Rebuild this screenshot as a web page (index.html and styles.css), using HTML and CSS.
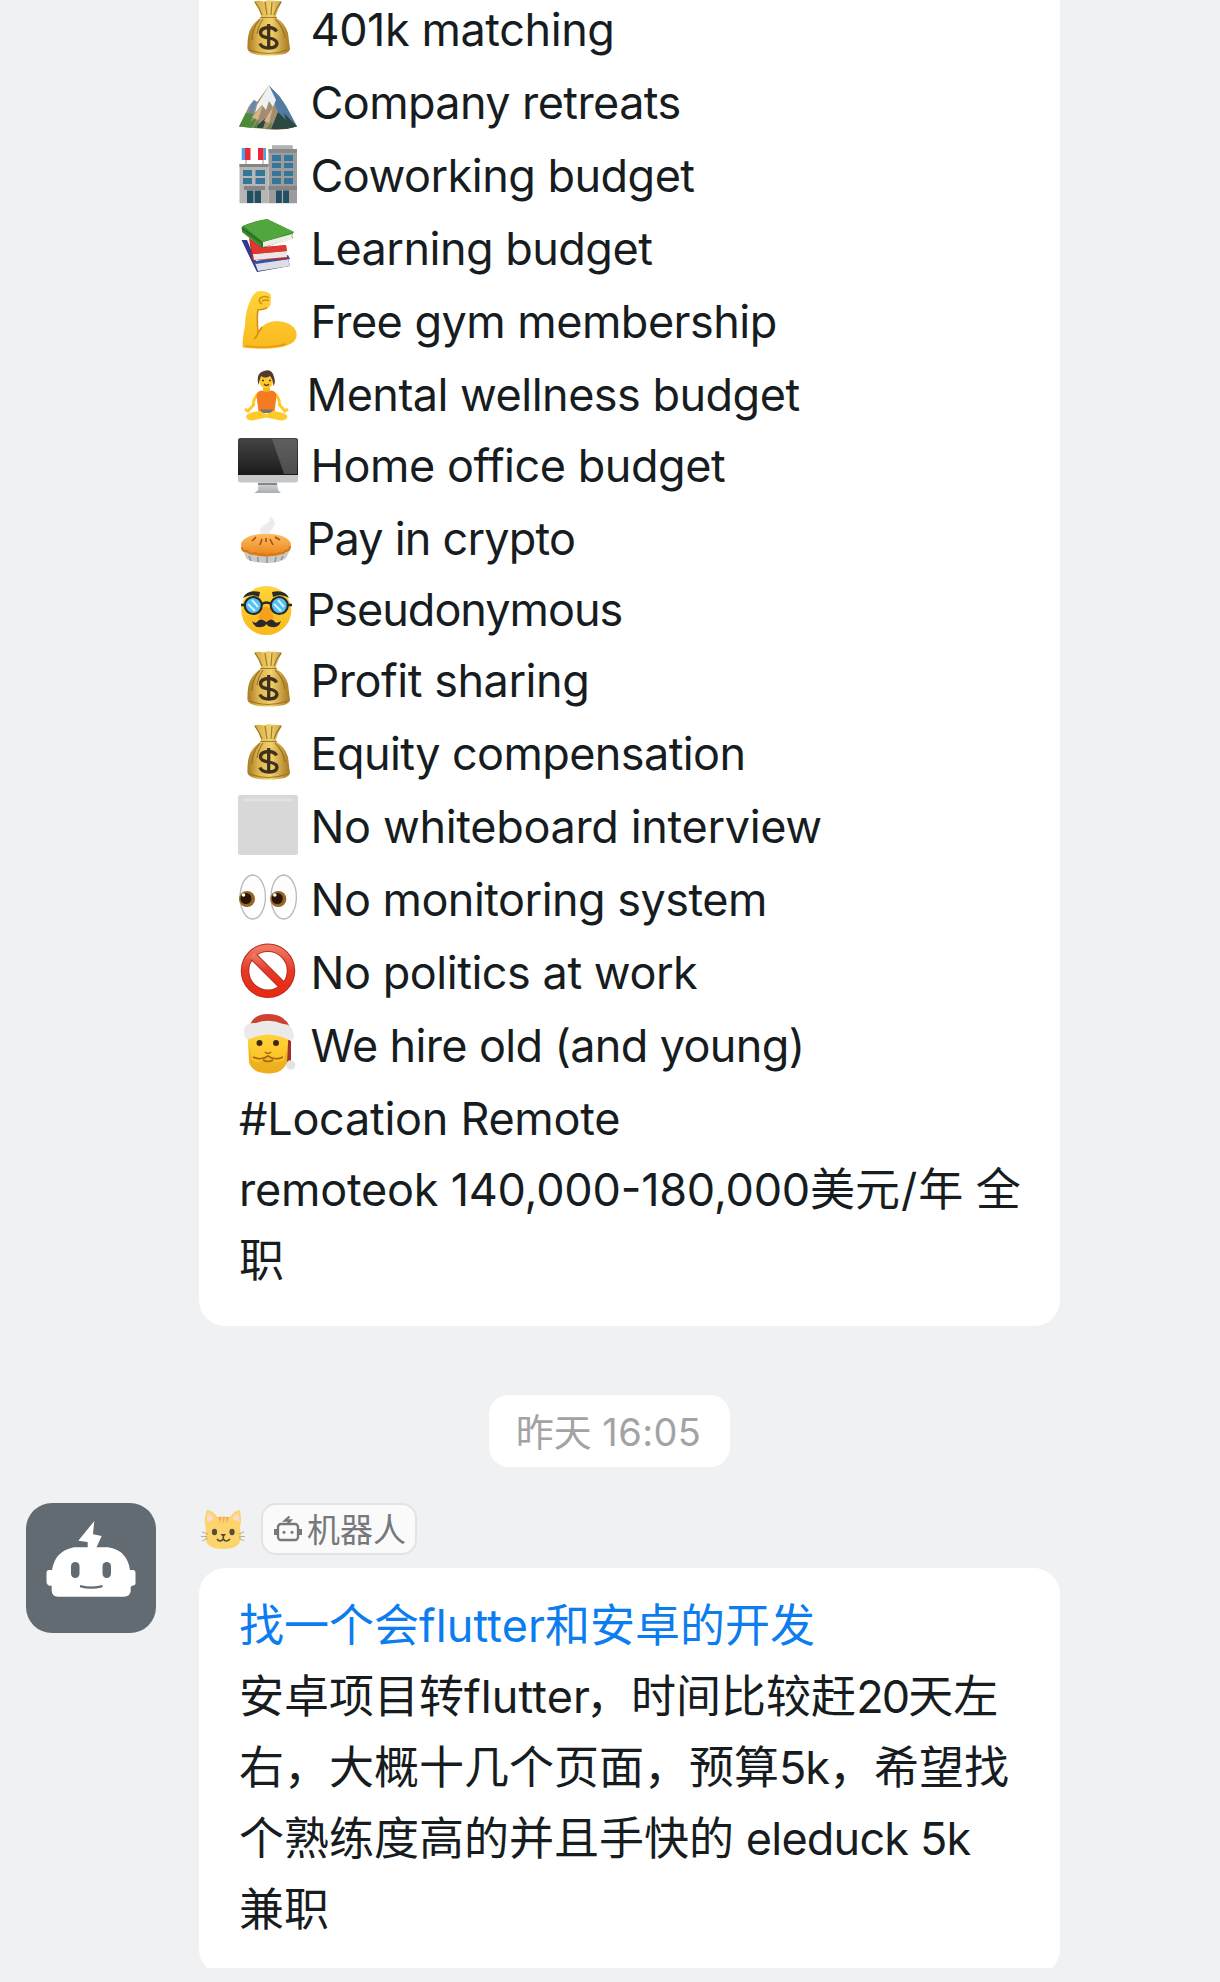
FILE: index.html
```html
<!DOCTYPE html>
<html lang="zh-CN">
<head>
<meta charset="utf-8">
<title>群聊</title>
<link rel="stylesheet" href="styles.css">
</head>
<body>
<svg class="defs" width="0" height="0" aria-hidden="true">
  <defs>
    <linearGradient id="gold"><stop offset="0" stop-color="#a77a24"/><stop offset=".25" stop-color="#dcb34b"/><stop offset=".55" stop-color="#f0d16d"/><stop offset="1" stop-color="#a8781f"/></linearGradient>
    <linearGradient id="skin" x2="0" y2="1"><stop offset="0" stop-color="#ffd43a"/><stop offset="1" stop-color="#f9b91d"/></linearGradient>
    <linearGradient id="crust" x2="0" y2="1"><stop offset="0" stop-color="#ffbd62"/><stop offset="1" stop-color="#e98418"/></linearGradient>
    <linearGradient id="screen" x2="0" y2="1"><stop offset="0" stop-color="#454545"/><stop offset="1" stop-color="#1a1a1a"/></linearGradient>
    <linearGradient id="metal" x2="0" y2="1"><stop offset="0" stop-color="#d9dbdd"/><stop offset="1" stop-color="#aaaeb2"/></linearGradient>
    <linearGradient id="red" x2="0" y2="1"><stop offset="0" stop-color="#ee7962"/><stop offset=".5" stop-color="#e33a28"/><stop offset="1" stop-color="#e82b14"/></linearGradient>
    <symbol id="bag" viewBox="0 0 60 60">
      <path d="M16 3.500Q21 2 26 3.500Q30 1.500 34 2.500Q40 3 44 3.500Q40 10 38 17.500L38.500 20Q47 25 50 35Q51 44 52 51Q51 57.500 31 57.500Q11 57.500 9.500 51Q9 36 13.500 29Q17 23 23 20L23 17.500Q21 10 16 3.500Z" fill="url(#gold)"/>
      <path d="M17 4Q22 11 24 17M27 4L29 17M34 4L33 17M43 4Q38 10 36 17M22 19.500H39M22 21Q14 30 14 42M25 21Q20 28 19 36M37 21Q45 28 47 40M12 52Q31 59 49 52" fill="none" stroke="#8b611b" stroke-width="1.200" opacity=".75"/>
      <path d="M38.500 33.500Q37 30 31 29.500Q22.500 29.500 22.500 35Q22.500 39 31 40Q39 41.500 39 45.500Q38.500 50 31 50Q23.500 50 22 45.500M30.700 26V51.500" fill="none" stroke="#41301c" stroke-width="3.300"/>
    </symbol>
  </defs>
</svg>
<main class="thread">
  <section class="bubble bubble-first">
    <div class="row first"><svg class="icon"><use href="#bag"/></svg><span class="t r1">401k matching</span></div>
    <div class="row"><svg class="icon" viewBox="0 0 60 60">
      <path d="M1 55.500L11 35L16 29L19 31L31 14.500L42 26L48 35L59 55.500Q45 60 31 58.500Z" fill="#a48c70"/>
      <path d="M31 14.500L42 26L48 35L59 55.500L48 58L42 44L38 37L34 23Z" fill="#507ba2"/>
      <path d="M31 14.500L19 34L17 42L24 34L28 39L31 30L35 36L38 29Z" fill="#edf1f2"/>
      <path d="M13 33L16 29L19 31L15 42L9 48Z" fill="#638bb2"/>
      <path d="M1 55.500L8 42L16 43L12 51L19 47L14 57Z" fill="#4b8b37"/>
      <path d="M16 57L29 46L25 57ZM33 58L40 41L48 49L46 42L59 55.500L48 58Z" fill="#2c4941"/>
      <path d="M14 46L25 34L20 49ZM26 50L35 36L31 52Z" fill="#d6b58a"/>
      <path d="M15 56L21 48L19 57ZM28 58L34 51L33 58Z" fill="#598842"/>
    </svg><span class="t r2">Company retreats</span></div>
    <div class="row"><svg class="icon" viewBox="0 0 60 60">
      <path d="M34 1.500H54.500V5H59V59.300H30.500V5H34Z" fill="#9d9c9c"/><path d="M34 1.500H54.500V5H34Z" fill="#b2b2b2"/><path d="M30.500 5H59V9H30.500Z" fill="#87898a"/>
      <path d="M1.500 20H30.500V59.300H1.500Z" fill="#b6b6b5"/><path d="M1.500 20H30.500V23H1.500ZM6 42H27V46H6ZM30.500 42H59V46H30.500Z" fill="#858585"/>
      <path d="M8 16V20M25 16V20" stroke="#999"/><path d="M3.700 4H28V16H3.700Z" fill="#fff"/><path d="M3.700 4H7V16H3.700ZM25.500 4H28V16H25.500Z" fill="#44a5ef"/><path d="M7 4H12.500V16H7ZM20 4H25.500V16H20Z" fill="#ed2737"/>
      <path d="M5 26H14V32H5ZM17.500 26H27V32H17.500ZM5 34H14V40H5ZM17.500 34H27V40H17.500ZM34 11H43V17H34ZM46 11H55V17H46ZM34 19H43V24H34ZM46 19H55V24H46ZM34 27H43V32H34ZM46 27H55V32H46ZM34 34H43V40H34ZM46 34H55V40H46Z" fill="#35769a"/>
      <path d="M9 46.500H23V59H9ZM38 46.500H51V59H38Z" fill="#264e61"/><path d="M16 46V59M44.500 46V59" stroke="#a4b2b8" stroke-width="1.200"/>
    </svg><span class="t r3">Coworking budget</span></div>
    <div class="row"><svg class="icon" viewBox="0 0 60 60">
      <path d="M3.500 23L14 45L19 55L52 49L50 41L18 44L9 23Z" fill="#2d3c8c"/><path d="M17 46L50 42L52 49L20 54Z" fill="#dce0e6"/><path d="M14 45L50 38L52 42L18 47Z" fill="#3c50a7"/>
      <path d="M11 21L14 41Q14 45 17 43L49 42V38L48 28L24 30Z" fill="#ce2726"/><path d="M15 37L49 34V40L16 43Z" fill="#e8e8e7"/><path d="M12 23L24 31L48 28L49 34L15 37Z" fill="#df3830"/>
      <path d="M3.700 9.700Q15 4 29 2L56 15Q53 18 55 21L24 31L4 15Z" fill="#3c8c31"/><path d="M25 25L54 17Q53 20 55 22L25 30Q22 28 25 25Z" fill="#eceee5"/><path d="M5 8.500L29 2L56 15L25 25Z" fill="#51a73d"/><path d="M4 11L24 26V30" fill="none" stroke="#286f27" stroke-width="2"/>
    </svg><span class="t r4">Learning budget</span></div>
    <div class="row"><svg class="icon" viewBox="0 0 60 60">
      <path d="M14 7Q17 1 22 1Q30 1 33 5L32.500 15Q30 20 21 19.500Q19 29 20 42Q25 32 38 31Q53 31 58 41Q61 51 50 55Q36 61 4.700 57.500Q4 50 7 36Q7 20 14 7Z" fill="url(#skin)"/>
      <path d="M19 20Q24 20 29 18M19.500 21Q19 33 20 42Q20 46 16 49M20 43L24 37M22 8Q28 5 31 8M24 11Q29 9 31 11M22 8Q20 12 24 14" fill="none" stroke="#d58b14" stroke-width="1.500"/>
      <path d="M7 56Q31 59 48 54" fill="none" stroke="#e79b13" stroke-width="1.500"/>
    </svg><span class="t r5">Free gym membership</span></div>
    <div class="row"><svg class="icon narrow" viewBox="0 0 60 60">
      <path d="M25 22H32V30H25Z" fill="#f3b71b"/><path d="M20 31Q15 36 15.500 42L10 48L7 46M37 31Q42 36 41.500 42L47 48L50 46" fill="none" stroke="#ffc928" stroke-width="3"/>
      <path d="M18.500 33Q18.500 28 24 27.500Q28 30 33 27.500Q38.500 28 38.500 33L36.500 48.500H20.500Z" fill="#f47b22"/><path d="M22 46.500H35L33.500 50H24Z" fill="#757575"/>
      <path d="M21 48Q10 49.500 8 53Q8 57.500 15 57.500L28 54.500L43 57.500Q49 57.500 49.500 53Q47 49.500 36 48L28.500 51Z" fill="#ffca28"/>
      <ellipse cx="28.300" cy="17.500" rx="7" ry="8" fill="#fdca2b"/><path d="M20.500 22Q17.500 10 26 8Q34 5 36 14Q38 20 35.500 23Q35 16 32 13Q27 16 23 13Q21.500 17 20.500 22Z" fill="#543930"/><path d="M24 17.500H26M31 17.500H33M26 21Q28.500 24 31 21" fill="none" stroke="#5a3b20" stroke-width="1.300"/>
    </svg><span class="t r6">Mental wellness budget</span></div>
    <div class="row tight"><svg class="icon" viewBox="0 0 60 60">
      <path d="M20.500 48H39L40 56L43 59H16.500L20 56Z" fill="url(#metal)"/><path d="M20 50H39" stroke="#888" stroke-width="2"/><rect y="4" width="60" height="44.500" rx="2.500" fill="#c5c8cb"/><path d="M0 41V6.500Q0 4 2.500 4H57.500Q60 4 60 6.500V41Z" fill="url(#screen)"/><path d="M34 5H58L59 7V40H46Z" fill="#777" opacity=".55"/>
    </svg><span class="t r7">Home office budget</span></div>
    <div class="row"><svg class="icon narrow" viewBox="0 0 60 60">
      <path d="M5 43L8 51Q13 56 28 56Q43 56 48 51L52 43Z" fill="#c9c9c9"/><path d="M11 49L13 54M20 50V55M29 50V56M38 50L37 55M45 49L43 53" stroke="#929292" stroke-width="1.500"/>
      <ellipse cx="28" cy="38" rx="25" ry="11.500" fill="url(#crust)"/><path d="M4 40Q4 45 9 44Q12 48 17 46Q21 49 25 47Q29 50 33 47Q38 49 41 46Q46 47 47 44Q52 44 52 39" fill="none" stroke="#d57816" stroke-width="2"/>
      <path d="M24 32L22 38M28 31V35M32 32L35 38M18 30L14 34M37 30L42 33" stroke="#a64e16" stroke-width="1.600"/><path d="M23 27Q20 20 28 17Q33 14 32 9Q40 15 35 21Q31 25 32 27Z" fill="#ececec"/>
    </svg><span class="t r8">Pay in crypto</span></div>
    <div class="row tight"><svg class="icon narrow" viewBox="0 0 60 60">
      <ellipse cx="28.300" cy="32.500" rx="25" ry="24.500" fill="url(#skin)"/><path d="M23 31Q28 26 33 31L36 40Q28 46 20 40Z" fill="#f5a11c"/>
      <circle cx="15.300" cy="27.500" r="8.500" fill="#53c0f3" stroke="#282828" stroke-width="2.200"/><circle cx="41.300" cy="27.500" r="8.500" fill="#53c0f3" stroke="#282828" stroke-width="2.200"/>
      <path d="M10 26L17 33M14 22L20 29M36 26L43 33M40 22L46 29" stroke="#d8f5ff" stroke-width="2"/><path d="M24 26Q28.500 23 33 26M3 27H7M50 27H54" fill="none" stroke="#282828" stroke-width="2.300"/>
      <path d="M5 20Q9 11 22 14L21 19Q13 15 5 20ZM51 20Q47 11 34 14L35 19Q43 15 51 20ZM28.300 44Q22 39 19 44Q17 46 14 43Q16 50 23 49Q27 49 28.300 46Q30 49 34 49Q41 50 43 43Q39 46 37 44Q34 39 28.300 44Z" fill="#2c2a29"/>
    </svg><span class="t r9">Pseudonymous</span></div>
    <div class="row tight"><svg class="icon"><use href="#bag"/></svg><span class="t r10">Profit sharing</span></div>
    <div class="row"><svg class="icon"><use href="#bag"/></svg><span class="t r11">Equity compensation</span></div>
    <div class="row"><svg class="icon" viewBox="0 0 60 60"><rect width="60" height="60" rx="2.500" fill="#d8d8d8"/><path d="M5 5H55" stroke="#e3e3e3" stroke-width="2.500"/></svg><span class="t r12">No whiteboard interview</span></div>
    <div class="row"><svg class="icon" viewBox="0 0 60 60">
      <g fill="#fdfdfd" stroke="#b9b9b9" stroke-width="1.300"><ellipse cx="14.700" cy="29" rx="12.700" ry="22"/><ellipse cx="45.700" cy="29" rx="12.700" ry="22"/></g><g fill="#936624"><circle cx="9" cy="31" r="8"/><circle cx="40.300" cy="31" r="8"/></g><g fill="#2b1403"><circle cx="8" cy="30.500" r="5.500"/><circle cx="39.300" cy="30.500" r="5.500"/></g><g fill="#fff"><circle cx="5.500" cy="27" r="1.800"/><circle cx="36.800" cy="27" r="1.800"/></g>
    </svg><span class="t r13">No monitoring system</span></div>
    <div class="row"><svg class="icon" viewBox="0 0 60 60"><g fill="none" stroke="#ba2a1d" stroke-width="8.500"><circle cx="30" cy="29.700" r="23"/><path d="M14 14L46 46"/></g><g fill="none" stroke="url(#red)" stroke-width="6.500"><circle cx="30" cy="29.700" r="23"/><path d="M14 14L46 46"/></g></svg><span class="t r14">No politics at work</span></div>
    <div class="row"><svg class="icon" viewBox="0 0 60 60">
      <path d="M45 22L53 27V49L48 50Z" fill="#9e3325"/><path d="M9.700 24Q20 19 30 20Q42 19 50.300 24L49 48Q45 59.500 30 59.500Q14 59 11 48Z" fill="url(#skin)"/><path d="M11 31L14 46Q21 51 29 44Q39 51 46 46L50 31L49 48Q45 59.500 30 59.500Q14 59 11 48Z" fill="#dda21c" opacity=".45"/>
      <path d="M11 14Q14 0 30 0Q49 0 53 17L31 17Z" fill="#cf4131"/><path d="M6 17Q6 8 18 9Q31 4 45 10Q55 10 56 23Q55 29 47 24Q30 17 14 24Q6 29 6 17Z" fill="#ebeae9"/>
      <circle cx="21.500" cy="29" r="3" fill="#3e2815"/><circle cx="38" cy="29" r="3" fill="#3e2815"/><path d="M27 38Q30 41 33 38M15 43Q23 47 30 42Q37 47 45 43M25 46Q30 49 35 46" fill="none" stroke="#a36413" stroke-width="1.600"/><circle cx="52.700" cy="51" r="4.700" fill="#e6e4e1"/>
    </svg><span class="t r15">We hire old (and young)</span></div>
    <div class="row"><span class="t plain r16">#Location Remote</span></div>
    <p class="para"><span class="r17">remoteok 140,000-180,000</span>美元<span class="slash">/</span>年 全<br>职</p>
  </section>
  <time class="stamp">昨天 <span class="clock">16:05</span></time>
  <section class="message">
    <svg class="avatar" viewBox="0 0 130 130">
      <path d="M68.300 18L52.300 37.700L61.700 39V46H69.700L75.700 33L67 31.300Z" fill="#fff"/><path d="M48 44.300H82Q101 47 104 67H107Q109.500 67 109.500 70V80Q109.500 82.700 106 82.700L104.700 84V88Q104 93.700 98 93.700H32Q26 93.700 25.700 88V82.700H23Q20.500 82 20.500 79V70Q20.500 67 23 67H26Q29 48 48 44.300Z" fill="#fff"/>
      <g fill="#636b72"><rect x="45" y="59" width="8.500" height="16" rx="4.200"/><rect x="76.500" y="59" width="8.500" height="16" rx="4.200"/></g><path d="M55 83.300Q65 86 75.500 83.300" fill="none" stroke="#636b72" stroke-width="2.400" stroke-linecap="round"/>
    </svg>
    <div class="content">
      <header class="sender">
        <svg class="cat" viewBox="0 0 44 44">
          <path d="M6 21Q3 9 7 2Q13 2 17 9Q23 8 30 9Q34 3 40 2Q42 12 40 19L41 29Q41 41 23 41Q5.500 41 5.500 29Z" fill="#fbd46e"/><path d="M7.500 14Q6 8 8.500 5Q13 7 14 11ZM39 14Q40 8 38 5Q34 7 32.500 11Z" fill="#fbd9c8"/><path d="M18 9L20 15L21.500 9ZM22.500 9L23.500 16L25 9ZM26 9L27 15L29 9Z" fill="#f5a661"/>
          <ellipse cx="14.500" cy="24" rx="2.600" ry="3.300" fill="#5a4b36"/><ellipse cx="32" cy="24" rx="2.600" ry="3.300" fill="#5a4b36"/><path d="M20.500 26H26L23.300 29.500Z" fill="#554638"/><path d="M17 31Q20 35 23.300 31Q26 35 30 31M23.300 29V32" fill="none" stroke="#554638" stroke-width="1.600"/><path d="M2 24L8 26M1 28.500H7M2 33L8 30M39 26L44 24M39 28.500H45M39 30L44 33" stroke="#aaa084" stroke-width=".8"/>
        </svg>
        <span class="badge"><svg class="bot" viewBox="0 0 28 28"><g fill="none" stroke="#77787b" stroke-width="2.300"><rect x="4" y="9" width="20" height="16" rx="3"/><path d="M13.500 9L16.500 5.500H11L15.500 1.500"/><path d="M1.500 14V20M26.500 14V20" stroke-width="3"/></g><circle cx="10" cy="17.300" r="1.500" fill="#77787b"/><circle cx="18" cy="17.300" r="1.500" fill="#77787b"/></svg><span class="badge-text">机器人</span></span>
      </header>
      <div class="bubble bubble-job">
        <p class="para"><a class="link">找一个会<span class="fl">flutter</span>和安卓的开发</a><br>安卓项目转<span class="fl kern">flutter</span>，时间比较赶<span class="n20">20</span>天左<br>右，大概十几个页面，预算<span class="k5">5k</span>，希望找<br>个熟练度高的并且手快的<span class="duck"> eleduck 5k</span><br>兼职</p>
      </div>
    </div>
  </section>
</main>
</body>
</html>
```
FILE: styles.css
```css
* { box-sizing: border-box; }
body { margin: 0; background: #f0f1f3; color: #171c1f; font: 45px/71px Inter, "Noto Sans CJK SC", sans-serif; }
p { margin: 0; }
.defs { display: block; }
.thread { display: flex; flex-direction: column; height: 1968px; overflow: hidden; }
.bubble { background: #fff; border-radius: 26px; width: 861px; padding: 0 39px; }
.bubble-first { flex: none; margin-left: 199px; height: 1326px; border-radius: 0 0 26px 26px; }
.row { display: flex; align-items: flex-end; height: 73px; }
.row.tight { height: 71px; }
.row.first { height: 65px; }
.icon { flex: none; width: 60px; height: 60px; margin: 0 12.5px 7px 0; overflow: visible; }
.icon.narrow { margin-right: 8.5px; }
.t { white-space: nowrap; letter-spacing: -.52px; }
.r1 { letter-spacing: -.42px; }
.r2, .r11 { letter-spacing: -.6px; }
.r7, .r10, .r14 { letter-spacing: -.46px; }
.r8 { letter-spacing: -.78px; }
.r9 { letter-spacing: -1px; }
.r12 { letter-spacing: -.34px; }
.r15 { letter-spacing: -.64px; }
.r16 { letter-spacing: -.28px; }
.r17 { letter-spacing: -.225px; font-feature-settings: "case"; }
.slash { padding: 0 1px; }
.fl { letter-spacing: .12px; }
.kern { margin-right: -4px; }
.n20 { letter-spacing: -1.9px; }
.k5 { letter-spacing: -1px; }
.duck { letter-spacing: -.8px; }
.clock { letter-spacing: .4px; }
.plain { margin-left: 1px; }
.para { margin-left: 1px; white-space: nowrap; }
.stamp { flex: none; width: 241px; height: 72px; margin: 69px 0 0 489px; padding-right: 2px; border-radius: 20px; background: #fff; color: #a3a3a3; font-size: 38px; line-height: 74px; text-align: center; }
.message { display: flex; flex: none; margin-top: 36px; padding-left: 26px; }
.avatar { flex: none; width: 130px; height: 130px; border-radius: 26px; background: #636b72; }
.content { margin-left: 43px; }
.sender { display: flex; align-items: center; height: 52px; }
.cat { width: 44px; height: 44px; margin: 2px 17px 0 1px; overflow: visible; }
.badge { display: flex; align-items: center; width: 156px; height: 52px; padding-left: 11px; border: 2px solid #e1e3e5; border-radius: 15px; background: #fafafa; color: #77787b; font-size: 33px; line-height: 48px; white-space: nowrap; }
.badge-text { padding-top: 2px; }
.bot { width: 28px; height: 28px; margin-right: 5px; }
.bubble-job { height: 407px; margin-top: 13px; padding-top: 22px; }
.link { color: #0b7df0; }
```
